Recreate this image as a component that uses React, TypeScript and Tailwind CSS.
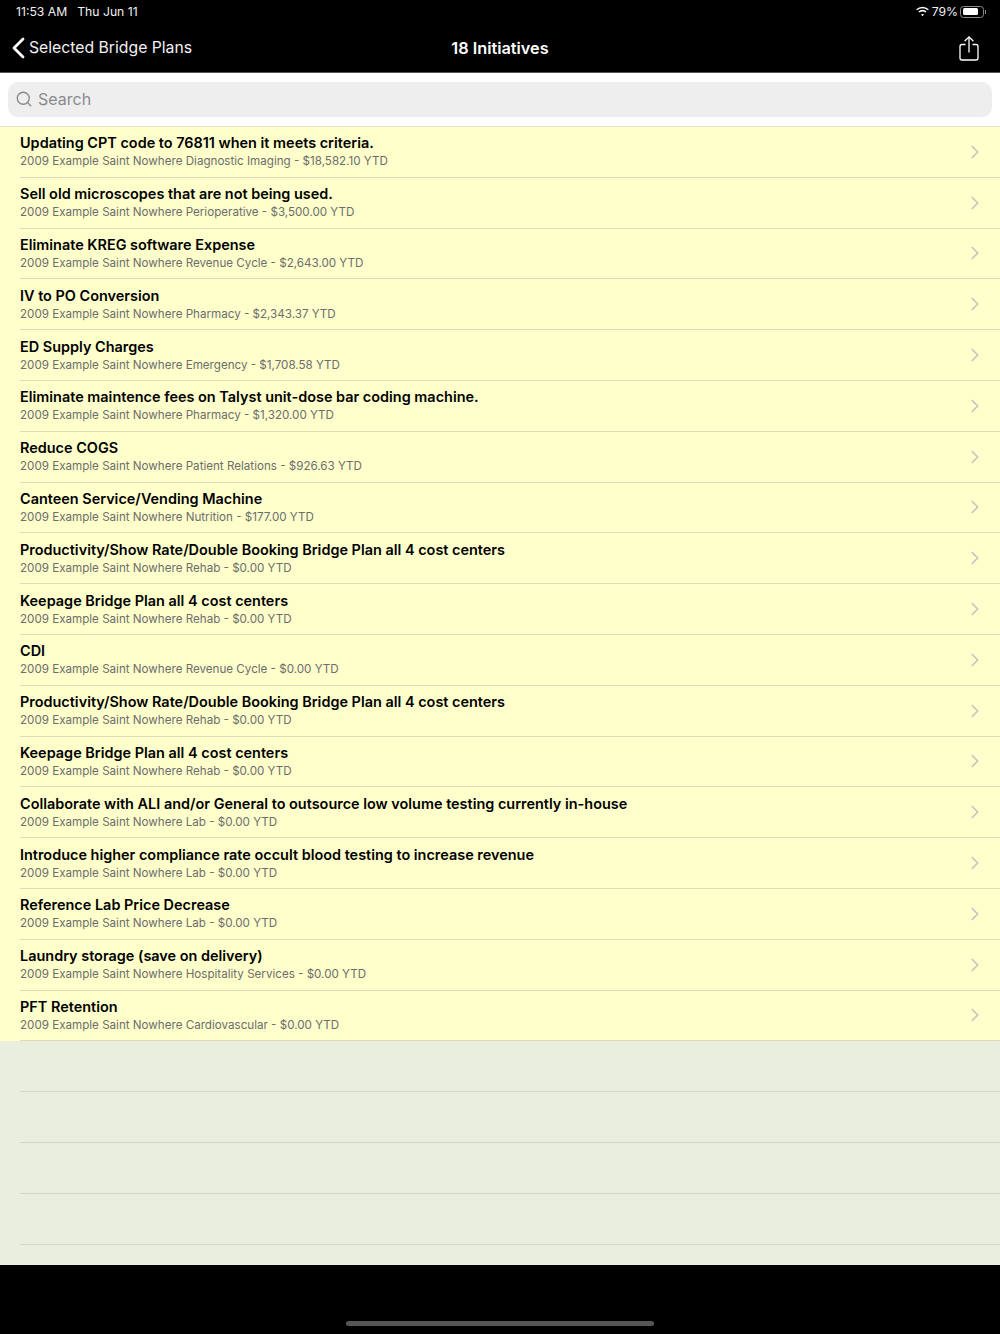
import { ChevronRight, Search } from 'lucide-react';

const initiatives = [
  ['Updating CPT code to 76811 when it meets criteria.', '2009 Example Saint Nowhere Diagnostic Imaging - $18,582.10 YTD'],
  ['Sell old microscopes that are not being used.', '2009 Example Saint Nowhere Perioperative - $3,500.00 YTD'],
  ['Eliminate KREG software Expense', '2009 Example Saint Nowhere Revenue Cycle - $2,643.00 YTD'],
  ['IV to PO Conversion', '2009 Example Saint Nowhere Pharmacy - $2,343.37 YTD'],
  ['ED Supply Charges', '2009 Example Saint Nowhere Emergency - $1,708.58 YTD'],
  ['Eliminate maintence fees on Talyst unit-dose bar coding machine.', '2009 Example Saint Nowhere Pharmacy - $1,320.00 YTD'],
  ['Reduce COGS', '2009 Example Saint Nowhere Patient Relations - $926.63 YTD'],
  ['Canteen Service/Vending Machine', '2009 Example Saint Nowhere Nutrition - $177.00 YTD'],
  ['Productivity/Show Rate/Double Booking Bridge Plan all 4 cost centers', '2009 Example Saint Nowhere Rehab - $0.00 YTD'],
  ['Keepage Bridge Plan all 4 cost centers', '2009 Example Saint Nowhere Rehab - $0.00 YTD'],
  ['CDI', '2009 Example Saint Nowhere Revenue Cycle - $0.00 YTD'],
  ['Productivity/Show Rate/Double Booking Bridge Plan all 4 cost centers', '2009 Example Saint Nowhere Rehab - $0.00 YTD'],
  ['Keepage Bridge Plan all 4 cost centers', '2009 Example Saint Nowhere Rehab - $0.00 YTD'],
  ['Collaborate with ALI and/or General to outsource low volume testing currently in-house', '2009 Example Saint Nowhere Lab - $0.00 YTD'],
  ['Introduce higher compliance rate occult blood testing to increase revenue', '2009 Example Saint Nowhere Lab - $0.00 YTD'],
  ['Reference Lab Price Decrease', '2009 Example Saint Nowhere Lab - $0.00 YTD'],
  ['Laundry storage (save on delivery)', '2009 Example Saint Nowhere Hospitality Services - $0.00 YTD'],
  ['PFT Retention', '2009 Example Saint Nowhere Cardiovascular - $0.00 YTD'],
];

function Wifi() {
  return (
    <svg width="15" height="11" viewBox="0 0 15 11" fill="white">
      <path d="M7.5 2.2c2 0 3.9.8 5.3 2.1l1-1.1A9.2 9.2 0 0 0 7.5.7a9.2 9.2 0 0 0-6.3 2.5l1 1.1a7.7 7.7 0 0 1 5.3-2.1z" />
      <path d="M7.5 5.4c1.1 0 2.2.4 3 1.2l1.1-1.1a5.9 5.9 0 0 0-8.2 0l1.1 1.1c.8-.8 1.9-1.2 3-1.2z" />
      <path d="M7.5 8c-.6 0-1.1.2-1.5.6l1.5 1.7L9 8.6c-.4-.4-.9-.6-1.5-.6z" />
    </svg>
  );
}

function Battery() {
  return (
    <div className="flex items-center">
      <div className="w-[24px] h-[12px] rounded-[3.5px] border border-[#8a8a8a] p-[1.5px]">
        <div className="h-full w-[79%] rounded-[1.5px] bg-white" />
      </div>
      <div className="ml-[1px] w-[1px] h-[4px] bg-[#8a8a8a]" />
    </div>
  );
}

function ShareIcon() {
  return (
    <svg width="20" height="25" viewBox="0 0 20 25" fill="none" stroke="white" strokeWidth="1.3" strokeLinecap="round" strokeLinejoin="round">
      <path d="M6 8.5H3a2 2 0 0 0-2 2V22a2 2 0 0 0 2 2h14a2 2 0 0 0 2-2V10.5a2 2 0 0 0-2-2h-3" />
      <path d="M10 16V1.2" />
      <path d="M6 4.8L10 1l4 3.8" />
    </svg>
  );
}

export default function App() {
  return (
    <div className="w-[1000px] h-[1334px] overflow-hidden bg-black flex flex-col font-['Inter','Liberation_Sans',sans-serif]">
      <header className="h-[73px] shrink-0 bg-black border-b border-[#555] text-white flex flex-col">
        <div className="h-[24px] flex items-center justify-between pl-[16px] pr-[14px] text-[12.2px] text-[#f0f0f0]">
          <div className="flex gap-[10px]">
            <span>11:53 AM</span>
            <span>Thu Jun 11</span>
          </div>
          <div className="flex items-center gap-[2px]">
            <Wifi />
            <span>79%</span>
            <Battery />
          </div>
        </div>
        <div className="flex-1 relative flex items-center justify-between pl-[10px] pr-[21px]">
          <div className="flex items-center gap-[2px]">
            <svg width="17" height="22" viewBox="0 0 17 22" fill="none" stroke="white" strokeWidth="2.8" strokeLinecap="round" strokeLinejoin="round">
              <path d="M13 2L4 11l9 9" />
            </svg>
            <span className="text-[15.75px] text-[#f2f2f2]">Selected Bridge Plans</span>
          </div>
          <span className="absolute left-0 right-0 text-center text-[16.3px] font-semibold">18 Initiatives</span>
          <ShareIcon />
        </div>
      </header>

      <div className="h-[53px] shrink-0 bg-white px-[8px] pt-[9px]">
        <div className="h-[35px] rounded-[10px] bg-[#eeeeee] flex items-center gap-[5px] pl-[7px] pb-[1px] text-[#8a8a8e]">
          <Search size={18} strokeWidth={1.8} />
          <span className="text-[16px] leading-none">Search</span>
        </div>
      </div>

      <main className="h-[1139px] shrink-0 bg-[#eaeedd] border-t border-[#e4e6cc] overflow-hidden">
        <ul className="bg-[#ffffcc]">
          {initiatives.map(([title, detail]) => (
            <li key={title + detail} className="h-[50.8px] pl-[20px] flex">
              <div className="flex-1 flex items-center justify-between border-b border-[#dcdcbc] pr-[14px]">
                <div className="pt-[1px]">
                  <div className="text-[14.45px] leading-[18px] font-semibold text-black">{title}</div>
                  <div className="mt-[1px] text-[11.62px] leading-[17px] text-[#6d6d6d]">{detail}</div>
                </div>
                <ChevronRight size={22} strokeWidth={1.8} className="text-[#c4c4be]" />
              </div>
            </li>
          ))}
        </ul>
        <div className="pl-[20px]">
          {[0, 1, 2, 3].map((i) => (
            <div key={i} className="h-[50.8px] border-b border-[#d3d6c6]" />
          ))}
        </div>
      </main>

      <footer className="flex-1 flex items-end justify-center pb-[8px]">
        <div className="w-[308px] h-[5px] rounded-full bg-[#555555]" />
      </footer>
    </div>
  );
}
